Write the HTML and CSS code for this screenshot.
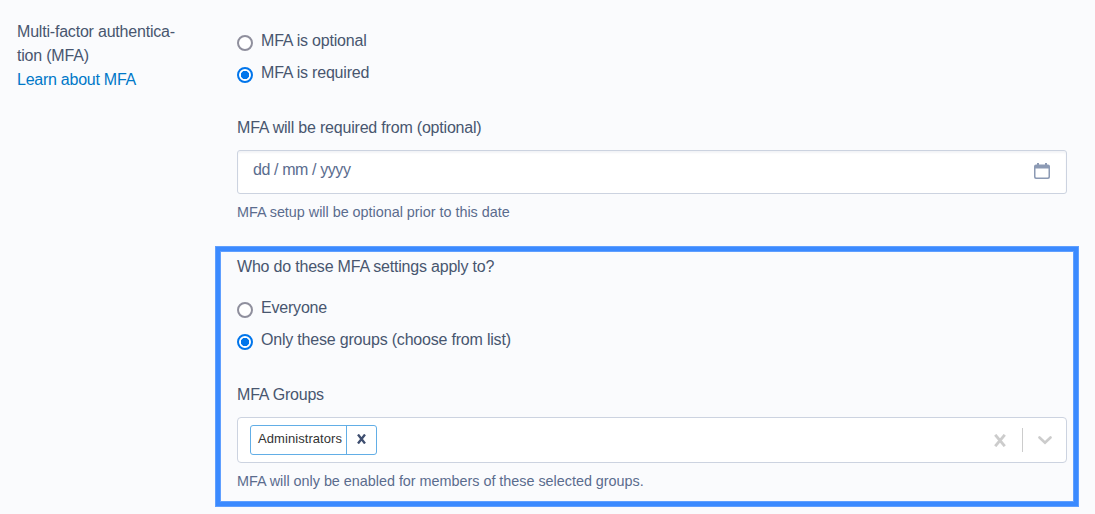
FILE: index.html
```html
<!DOCTYPE html>
<html lang="en">
<head>
<meta charset="utf-8">
<title>MFA settings</title>
<link rel="stylesheet" href="styles.css">
</head>
<body>
<div class="settings">
  <aside class="aside">
    <div>Multi-factor authentica-</div>
    <div>tion (MFA)</div>
    <a class="link">Learn about MFA</a>
  </aside>
  <main class="main">
    <div class="radios">
      <div class="radio"><i class="dot"></i><span>MFA is optional</span></div>
      <div class="radio"><i class="dot on"></i><span>MFA is required</span></div>
    </div>
    <div class="label">MFA will be required from (optional)</div>
    <div class="date">
      <span class="placeholder">dd / mm / yyyy</span>
      <svg class="cal" width="16" height="16" viewBox="0 0 16 16"><path fill="#8c9ab4" fill-rule="evenodd" d="M3 0h2v1.500h6V0h2v1.500h1a2 2 0 0 1 2 2V14a2 2 0 0 1-2 2H2a2 2 0 0 1-2-2V3.500a2 2 0 0 1 2-2h1zM1.500 5.500V13.500a1 1 0 0 0 1 1h11a1 1 0 0 0 1-1V5.500z"/></svg>
    </div>
    <div class="help">MFA setup will be optional prior to this date</div>
    <section class="highlight">
      <div class="label">Who do these MFA settings apply to?</div>
      <div class="radios group">
        <div class="radio"><i class="dot"></i><span>Everyone</span></div>
        <div class="radio"><i class="dot on"></i><span>Only these groups (choose from list)</span></div>
      </div>
      <div class="label">MFA Groups</div>
      <div class="select">
        <div class="tag"><span class="tag-name">Administrators</span><span class="tag-x"><svg width="9" height="10" viewBox="0 0 9 10"><path d="M1 .5l7 9M8 .5l-7 9" stroke="#3f4f70" stroke-width="2.300"/></svg></span></div>
        <svg class="clear" width="12" height="13" viewBox="0 0 12 13"><path d="M1.200.8l9.600 11.400M10.800.8L1.200 12.200" stroke="#ccc" stroke-width="2.800"/></svg>
        <i class="sep"></i>
        <svg class="chev" width="14" height="9" viewBox="0 0 14 9"><path d="M1.500 1.500L7 6.700l5.500-5.200" fill="none" stroke="#ccc" stroke-width="2.600" stroke-linecap="round"/></svg>
      </div>
      <div class="help">MFA will only be enabled for members of these selected groups.</div>
    </section>
  </main>
</div>
</body>
</html>
```
FILE: styles.css
```css
* { box-sizing: border-box; }
body {
  margin: 0;
  height: 514px;
  overflow: hidden;
  background: #fafbfd;
  color: #48566f;
  font: 16px/24px "Liberation Sans", Arial, sans-serif;
  letter-spacing: -0.2px;
}
.settings { display: flex; padding: 20px 28px 0 17px; }
.aside { width: 220px; white-space: nowrap; }
.link { display: block; color: #0078c8; text-decoration: none; letter-spacing: -0.25px; }
.main { flex: 1; padding-top: 9px; white-space: nowrap; }
.radios { display: grid; gap: 8px; margin-bottom: 31px; }
.radio { display: flex; gap: 8px; height: 24px; }
.dot {
  width: 16px;
  height: 16px;
  margin-top: 6px;
  border: 2px solid #8f8f9d;
  border-radius: 50%;
  background: #fff;
}
.dot.on {
  border-color: #0075eb;
  background: radial-gradient(circle, #0075eb 3.800px, #fff 4.500px);
}
.date {
  display: flex;
  justify-content: space-between;
  height: 44px;
  margin-top: 10px;
  padding: 7px 16px 0 15px;
  border: 1px solid #ccd3e0;
  border-radius: 3px;
  background: #fff;
  box-shadow: inset 0 2px 2px #f3f4f7;
  color: #5a6c8e;
}
.placeholder { letter-spacing: -0.4px; }
.cal { margin-top: 5px; }
.help { margin-top: 6px; font-size: 14.400px; letter-spacing: -0.02px; color: #5a6c8e; }
.highlight {
  height: 259px;
  margin: 23px -11px 0 -21px;
  padding: 4px 7px 0 17px;
  border: 4px solid #3b8aff;
  box-shadow: 0 0 0 1px #5f9fff, inset 0 0 0 1px #5f9fff;
}
.radios.group { margin-top: 17px; }
.select {
  display: flex;
  align-items: center;
  height: 46px;
  margin-top: 10px;
  padding: 0 14px 0 12px;
  border: 1px solid #ccd3e0;
  border-radius: 4px;
  background: #fff;
}
.tag {
  display: flex;
  height: 30px;
  margin-right: auto;
  border: 1px solid #62aee6;
  border-radius: 3px;
  font-size: 13px;
  line-height: 26px;
  letter-spacing: 0.07px;
  color: #333;
}
.tag-name { width: 96px; padding-left: 7px; border-right: 1px solid #62aee6; }
.tag-x { display: flex; align-items: center; justify-content: center; width: 29px; padding-bottom: 3px; }
.sep { width: 1px; height: 24px; margin: 0 15px 0 16px; background: #ccc; }
```
